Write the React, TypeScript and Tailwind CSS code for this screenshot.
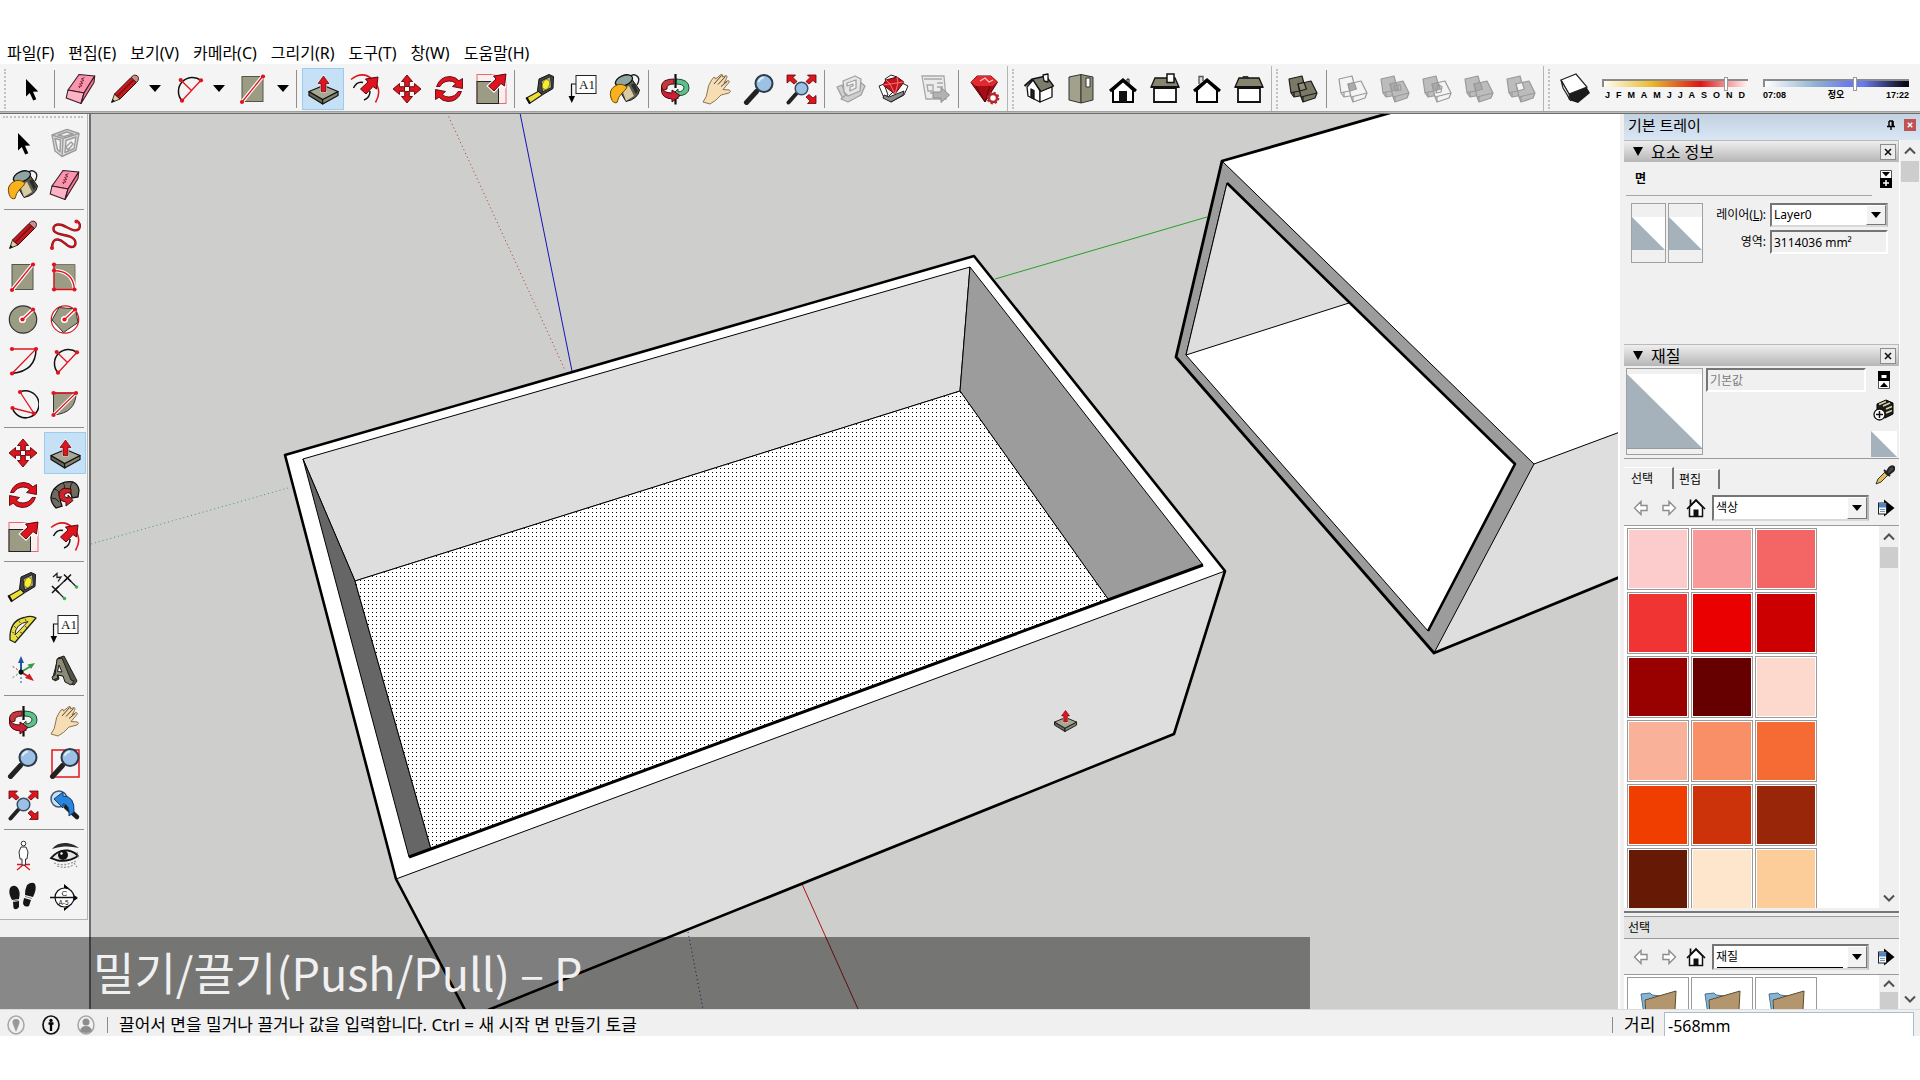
import type { ReactNode } from 'react';

const RED = '#e0141e';
const CLAY = '#9c9b84';
const INK = '#111111';

const SVG = ({ children }: { children: ReactNode }) => (
  <svg viewBox="0 0 32 32" className="size-8 shrink-0" fill="none" aria-hidden="true">
    {children}
  </svg>
);

/* ---------- icons ---------- */

const Dot = ({ x, y }: { x: number; y: number }) => <circle cx={x} cy={y} r="2.1" fill={RED} />;

const CursorIcon = () => (
  <SVG>
    <path d="M11 6V23.5L14.8 20 18.2 27.5 21.3 26.2 18 18.8 23.3 18.5Z" fill="#000" />
  </SVG>
);

const EraserIcon = () => (
  <SVG>
    <g stroke="#3a1a22" strokeWidth="1.1" strokeLinejoin="round">
      <path d="M14 1.5 29.7 3 19 20 3 17Z" fill="#f996ae" />
      <path d="M3 17 19 20 16 30.5 1.2 25Z" fill="#fcb4c4" />
      <path d="M29.7 3 29 9.5 16 30.5 19 20Z" fill="#ee7c98" />
    </g>
    <path d="M19.5 4.5 16.5 6 19 7.5 15.5 8.5 18 10.5 14.5 11 17 13 13.5 13.5 15 15" stroke="#7d2b42" />
  </SVG>
);

const PencilIcon = () => (
  <SVG>
    <path d="M2.5 29.5 5.5 21 11 26Z" fill="#e6cf9c" stroke="#333" />
    <path d="M5.5 21 22 4.5 27.5 9.5 11 26Z" fill="#c31a20" stroke="#3b0808" />
    <path d="M8 23.5 24.5 7" stroke="#7c0e12" strokeWidth="1.5" />
    <path d="M22 4.5 24.5 2.3Q27 1.5 29 3.5 30 6 29 7.5L27.5 9.5Z" fill="#c98f90" stroke="#442020" />
    <path d="M2.5 29.5 3.7 26 6 28.2Z" fill="#111" />
  </SVG>
);

const ArcIcon = () => (
  <SVG>
    <path d="M9 27.7A14 14 0 0 1 28 7.3" stroke={INK} strokeWidth="1.5" />
    <path d="M9 27.7 28 7.3M7.7 7 18.5 17.5" stroke={RED} strokeWidth="1.3" />
    <Dot x={7.7} y={7} />
    <Dot x={28} y={7.3} />
    <Dot x={9} y={27.7} />
  </SVG>
);

const RectIcon = () => (
  <SVG>
    <rect x="5" y="3.5" width="21" height="25" fill={CLAY} stroke="#55544a" />
    <path d="M5 29 26 3" stroke="#fff" strokeWidth="3.6" />
    <path d="M5 29 26 3" stroke={RED} strokeWidth="1.3" />
    <Dot x={5} y={29} />
    <Dot x={26} y={3.5} />
  </SVG>
);

const PushPullShape = () => (
  <>
    <g stroke={INK} strokeLinejoin="round" strokeWidth="1.2">
      <path d="M2 18.5 15.7 26.5V31L2 22.5Z" fill="#66655a" />
      <path d="M31 18.5 15.7 26.5V31L31 22.5Z" fill="#84836f" />
      <path d="M16.5 12.5 31 18.5 15.7 26.5 2 18.5Z" fill="#a8a793" />
    </g>
    <path d="M16.5 3 22 10.5H19V18.5H14V10.5H11Z" fill={RED} stroke="#fff" strokeWidth="1.5" />
    <path d="M16.5 3 22 10.5H19V18.5H14V10.5H11Z" fill={RED} stroke="#4a0508" strokeWidth=".7" />
  </>
);

const PushPullIcon = () => (
  <SVG>
    <PushPullShape />
  </SVG>
);

const DiagonalArrow = () => (
  <path d="M31 1 29.5 13 26 10.5 19 18 13.5 13 21 6 18.5 3Z" fill={RED} stroke="#5a060a" strokeLinejoin="round" />
);

const OffsetIcon = () => (
  <SVG>
    <path d="M2 6.5Q14-3 24 7 34 17 26.5 29.5" stroke={RED} strokeWidth="1.5" />
    <path d="M4.5 15Q8 8 14 9.5M21 18Q21 25 15 27" stroke={INK} strokeWidth="1.5" />
    <g transform="translate(-2 3)">
      <DiagonalArrow />
    </g>
  </SVG>
);

const MoveIcon = () => (
  <SVG>
    {[0, 90, 180, 270].map((angle) => (
      <path
        key={angle}
        transform={`rotate(${angle} 16 16)`}
        d="M16 2 21.5 8.5H18.3V13.5H13.7V8.5H10.5Z"
        fill={RED}
        stroke="#5a060a"
        strokeWidth=".9"
        strokeLinejoin="round"
      />
    ))}
  </SVG>
);

const RotateIcon = () => (
  <SVG>
    {[0, 180].map((angle) => (
      <path
        key={angle}
        transform={`rotate(${angle} 16 16)`}
        d="M3.5 13.5Q7 3.5 17 3.5 23 4 25.8 7.8L29.5 5.5V15.5L19.5 13.5 22.8 10.6Q20 7.8 16 8 9.5 8.5 7 13.5Z"
        fill={RED}
        stroke="#5a060a"
        strokeWidth=".9"
        strokeLinejoin="round"
      />
    ))}
  </SVG>
);

const ScaleIcon = () => (
  <SVG>
    <rect x="2" y="1.5" width="29" height="29" fill="#fbeeee" stroke="#e56a70" />
    <rect x="2" y="8.5" width="21.5" height="22" fill={CLAY} stroke="#222" />
    <path d="M31 1 29.5 13 26 10.5 19 18 13.5 13 21 6 18.5 3Z" stroke="#fff" strokeWidth="3" />
    <DiagonalArrow />
  </SVG>
);

const TapeIcon = () => (
  <SVG>
    <path d="M1.5 25 14 18 17 22 4.5 30.5Z" fill="#eee032" stroke="#222" strokeWidth="1.2" />
    <path d="M1.5 24.5 5 30.5" stroke="#111" strokeWidth="2.2" />
    <path d="M14 6 24 1.5 28.5 3.5 28 15.5 18 21.5 12.5 18Z" fill="#444" stroke="#111" strokeLinejoin="round" />
    <path d="M16 8 25.5 3.5 26.5 14.5 17.5 19Z" fill="#a9a9a4" stroke="#222" />
    <ellipse cx="21" cy="11.5" rx="3.5" ry="5" transform="rotate(20 21 11.5)" fill="#f8ee2c" stroke="#8a8420" />
  </SVG>
);

const TextIcon = () => (
  <SVG>
    <path d="M11 11H4.5V25" stroke={INK} strokeWidth="1.2" />
    <path d="M1.5 23H8L4.8 30Z" fill="#000" />
    <rect x="9" y="2.5" width="20" height="18" fill="#fff" stroke="#222" />
    <text x="12" y="16" fontSize="13" fontFamily="Liberation Serif, serif" fill="#111">
      A1
    </text>
  </SVG>
);

const BucketIcon = () => (
  <SVG>
    <path d="M19 5Q25-1 29 4 31 7 28 12" stroke="#222" strokeWidth="1.4" />
    <path d="M6 10 22 5 30.5 17Q29 26 17 28.5Z" fill="#5f5c50" stroke="#111" />
    <path d="M13 16 20 13 25 23 17 28Z" fill="#d9cba2" />
    <path d="M22 12 25.5 10 29 18 27 21Z" fill="#2c2c2a" />
    <ellipse cx="15" cy="7.5" rx="9" ry="5" transform="rotate(-22 15 7.5)" fill="#8ea5a3" stroke="#111" strokeWidth="1.3" />
    <path d="M6 13Q12 9 18 14 17 17 13 20 9 24 8 29.5 4 31 2 25-.5 17 6 13Z" fill="#f9b21d" stroke="#6b4a08" />
  </SVG>
);

const OrbitIcon = () => (
  <SVG>
    <path d="M17 6Q30 6 30 15 30 22 19 23V26L14 21 19 16V19Q25 18.5 25 14 24 11 17 11Z" fill="#5fc08b" stroke="#1f4a33" />
    <path d="M15 6Q3 6 2.5 13V18L8 16Q7 11 15 11Z" fill="#c4393c" stroke="#4a0a0c" />
    <path d="M2.5 14Q4 20 13 20V17L21 22.5 13 29V26Q3 25 2.5 18Z" fill="#cf1f38" stroke="#4a0a0c" />
    <path d="M16.5 1V15M16.5 26V31.5" stroke="#111" strokeWidth="2.2" />
  </SVG>
);

const HandIcon = () => (
  <SVG>
    <path
      d="M2 29Q6 24 6.5 18 7 12 10 8L12.5 4.5Q14.5 3.5 14.5 6L20 1.5Q22.5 1 21.5 4L25 2.5Q27 3 25.5 5.5L23 10 27 7.5Q29.5 8 27.5 10L22 16.5 28.5 17Q30.5 18.5 28 20L20 22Q15 28 9 31Z"
      fill="#f6ddb4"
      stroke="#8a7350"
      strokeLinejoin="round"
    />
    <path d="M13 11 20.5 2.5M17 11.5 24.5 3.5M20 13.5 26 8.5" stroke="#3c3120" strokeWidth=".9" />
  </SVG>
);

const ZoomShape = () => (
  <>
    <path d="M3.5 29.5 13.5 18.5" stroke="#222" strokeWidth="5" strokeLinecap="round" />
    <circle cx="21" cy="10.5" r="8.5" fill="#9cc1e4" stroke="#2c3a4a" strokeWidth="2" />
    <path d="M15.5 9Q17 5 21 4.5" stroke="#dcebf8" strokeWidth="2" />
  </>
);

const ZoomIcon = () => (
  <SVG>
    <ZoomShape />
  </SVG>
);

const ZoomWindowIcon = () => (
  <SVG>
    <rect x="3" y="3" width="27" height="27" stroke={RED} strokeWidth="1.5" />
    <ZoomShape />
  </SVG>
);

const ZoomExtentsIcon = () => (
  <SVG>
    <path d="M3.5 29.5 11 21" stroke="#222" strokeWidth="4" strokeLinecap="round" />
    <circle cx="16.5" cy="15.5" r="6.3" fill="#9cc1e4" stroke="#3a4c60" strokeWidth="1.5" />
    {[
      'M2 2H10.5L8 4.5 12 8.5 9 11 5 7.5 2 10Z',
      'M31 2H22.5L25 4.5 21 8.5 24 11 28 7.5 31 10Z',
      'M31 30.5H22.5L25 28 21 24 24 21.5 28 25 31 22.5Z',
    ].map((d) => (
      <path key={d} d={d} fill={RED} stroke="#5a060a" strokeWidth=".8" />
    ))}
  </SVG>
);

const WarehouseIcon = () => (
  <SVG>
    <g stroke="#a0a0a0" strokeWidth="1.3" fill="#cfcfcf" strokeLinejoin="round">
      <path d="M2 14 7 12 11 23 8 26Z" />
      <path d="M25 9 30 13 26 22 13 29 6 26 12 21 24 16Z" />
      <path d="M8 8 20 3 26 6 25 18 13 23 9 19Z" fill="#e6e6e6" />
      <path d="M12 10 21 7V15L15 18V14L18 13V11L12 13Z" fill="#f4f4f4" />
    </g>
  </SVG>
);

const ShareModelIcon = () => (
  <SVG>
    <g stroke="#222" fill="#fff" strokeLinejoin="round">
      <path d="M2 13 7 11 11 22 7 25Z" />
      <path d="M25 10 31 13 27 22 14 29 11 24Z" />
      <path d="M8 6 14 2 20 4 12 12Z" />
      <path d="M7 22 12 24 27 18 26 22 14 29 6 25Z" fill="#8d8d8d" />
    </g>
    <path d="M9 7 20 4 27 9 18 21 6 12Z" fill="#c3131b" stroke="#5a060a" />
    <path d="M9 7 13 11 27 9M13 11 6 12M13 11 18 21 21 10 20 4" stroke="#ff8a8a" strokeWidth=".8" />
  </SVG>
);

const LayoutExportIcon = () => (
  <SVG>
    <g stroke="#a8a8a8" strokeWidth="1.3">
      <path d="M3 3H25L27 26H7Z" fill="#ececec" />
      <path d="M5 6H23M8 12H14V18H9ZM18 10H24M18 14H24M11 20H14" />
    </g>
    <path d="M14 19H22V14.5L30.5 22 22 29.5V25H14Z" fill="#b2b2b2" stroke="#8e8e8e" />
  </SVG>
);

const RubyIcon = () => (
  <SVG>
    <path d="M8 3H22L28.5 9 16 29 2 9.5Z" fill="#a50d14" stroke="#4a0508" />
    <path d="M8 3H22L28.5 9 24 13H7L2 9.5Z" fill="#e02a30" />
    <path d="M11 8 16 5 20 9 24 7" stroke="#ffc2c2" strokeWidth="1.3" />
    <path d="M7 13 16 29 21 13" stroke="#5d060a" />
    <circle cx="24" cy="25" r="4" fill="#fff" stroke="#b3262c" strokeWidth="2.5" />
    <circle cx="24" cy="25" r="5.5" stroke="#b3262c" strokeWidth="1.8" strokeDasharray="2.2 2.1" />
  </SVG>
);

const HouseIsoIcon = () => (
  <SVG>
    <g stroke="#111" strokeLinejoin="round" strokeWidth="1.3">
      <path d="M4 14 10 7 17 18V29L5 23Z" fill="#fff" />
      <path d="M17 18 29 14V24L17 29Z" fill="#fff" />
      <path d="M9.5 6 23 3 30.5 13 18 18.5Z" fill="#7e7d6d" />
      <path d="M9.5 6 1.5 13" strokeWidth="2" />
      <path d="M20 2 25 1V9L21 8Z" fill="#fff" />
      <path d="M8 16 11 17.5V26L8 24.5Z" fill="#222" />
    </g>
  </SVG>
);

const HouseTopIcon = () => (
  <SVG>
    <g stroke="#333" strokeLinejoin="round">
      <path d="M4 4 16 1.5V30L4 27Z" fill="#a2a18b" />
      <path d="M16 1.5 28 4V27L16 30Z" fill="#8f8e79" />
      <rect x="21" y="5" width="4" height="9" fill="#fff" />
    </g>
  </SVG>
);

const HouseFrontIcon = () => (
  <SVG>
    <path d="M6 17V29H26V17L16 8Z" fill="#fff" stroke="#000" strokeWidth="2" />
    <path d="M3 18 16 7 29 18" stroke="#000" strokeWidth="3" />
    <path d="M12 29V18H20V29Z" fill="#111" />
    <path d="M20 9V6H22V11" stroke="#111" />
  </SVG>
);

const HouseSideIcon = ({ chimney }: { chimney?: boolean }) => (
  <SVG>
    <path d="M5 15H27V29H5Z" fill="#fff" stroke="#111" strokeWidth="1.8" />
    {!chimney && <path d="M10 5V3.5H15V5" fill="#999" stroke="#333" />}
    <path d="M6 5H26L30 14H2Z" fill="#86856f" stroke="#111" strokeWidth="1.3" />
    <path d="M2 14H30" stroke="#111" strokeWidth="2" />
    {chimney && <rect x="18" y="1" width="7" height="8.5" fill="#fff" stroke="#111" strokeWidth="1.5" />}
  </SVG>
);

const HouseBackIcon = () => (
  <SVG>
    <path d="M8 11V3.5H12V8" fill="#ddd" stroke="#555" strokeWidth="1.3" />
    <path d="M6 17V29H26V17L16 8Z" fill="#fff" stroke="#000" strokeWidth="2" />
    <path d="M3 18 16 7 29 18" stroke="#000" strokeWidth="3" />
  </SVG>
);

type SolidKind = 'shell' | 'intersect' | 'union' | 'subtract' | 'trim' | 'split';

const SolidIcon = ({ kind }: { kind: SolidKind }) => {
  const dark = kind === 'shell';
  const line = dark ? '#1c1c18' : '#9a9a9a';
  const solid = dark ? '#7a7968' : '#bcbcbc';
  const clear = '#f4f4f4';
  const back = kind === 'intersect' ? clear : solid;
  const front = kind === 'intersect' || kind === 'subtract' ? clear : solid;
  const overlap = kind === 'split' ? clear : dark ? '#8d8c79' : '#ababab';
  return (
    <SVG>
      <g stroke={line} strokeLinejoin="round" strokeWidth="1.2">
        <path d="M2 6 15 3 19 18 18 22 7 24 4 20Z" fill={back} />
        <path d="M4 20 7 19 19 17M7 19 7 24" />
        <path d="M11 11 24 8 30 20 28 25 16 29 14 24Z" fill={front} />
        <path d="M14 24 30 20M16 24 16 29" />
        <path d="M11 11 17 9.5 19.5 16 13 18Z" fill={overlap} />
        {kind === 'union' && <path d="M15 13 21 11.5 22 17 17 18Z" />}
        {kind === 'subtract' && <path d="M17 11 21 14 20 19 15 20Z" />}
      </g>
    </SVG>
  );
};

const ShadowIcon = () => (
  <SVG>
    <path d="M6 17 10 27 19 30 31 20 27 13Z" fill="#1b1b1b" />
    <path d="M2 7 17 1 28 14 10 21Z" fill="#fff" stroke="#222" strokeWidth="1.2" />
    <path d="M2 7 4 15 12 28 10 21Z" fill="#f2f2f2" stroke="#222" strokeWidth="1.2" />
  </SVG>
);

const ComponentIcon = () => (
  <SVG>
    <g stroke="#9c9c9c" strokeWidth="1.4" strokeLinejoin="round">
      <path d="M3 8 18 2.5 30 6.5 27 23 13 29.5 6 24Z" fill="#dedede" />
      <path d="M3 8 14 11.5 30 6.5M14 11.5 13 29.5" />
      <path d="M6 11.5 11.5 13 11 25 8.5 22.5ZM17 13.5 27 10 25 21.5 16 25.5Z" fill="#f4f4f4" />
      <path d="M9 8 18 5 24 7 15 9.5Z" fill="#f4f4f4" />
      <path d="M17 20 22 15 24 17 19 23Z" />
    </g>
  </SVG>
);

const FREEHAND =
  'M3 29Q3 20 9 20.5C15 21 16 27 22 28 28 28 28 21 22 18 17 15.5 8 16 5 12 3 7 7 4.5 13 6 19 8 25 14 30 10 32 6 30 3 28 2.5';

const FreehandIcon = () => (
  <SVG>
    <path d={FREEHAND} stroke="#7b1116" strokeWidth="2.4" />
    <path d={FREEHAND} stroke={RED} strokeWidth="1.2" />
    <Dot x={3} y={29} />
    <Dot x={27.5} y={2.5} />
  </SVG>
);

const RotatedRectIcon = () => (
  <SVG>
    <path d="M5 3.5H26V28.5H5Z" fill={CLAY} stroke="#77766a" />
    <path d="M5 9.5Q24 10 25.5 28.5" stroke="#fff" strokeWidth="3.6" />
    <path d="M5 3.5V28.5H25.5Q24 10 5 9.5" stroke={RED} strokeWidth="1.3" />
    <Dot x={5} y={3.5} />
    <Dot x={5} y={9.5} />
    <Dot x={5} y={28.5} />
    <Dot x={25.5} y={28.5} />
  </SVG>
);

const CircleIcon = ({ polygon }: { polygon?: boolean }) => (
  <SVG>
    <circle cx="16" cy="16.5" r="13.7" fill={polygon ? '#fff' : CLAY} stroke={polygon ? RED : '#333'} strokeWidth="1.2" />
    {polygon && <path d="M10 4.5 26.5 6 29 19.5 14.5 29.5 3 17Z" fill={CLAY} stroke="#333" />}
    <path d="M15.5 16.5 26 6.5" stroke="#fff" strokeWidth="4" />
    <circle cx="15.5" cy="16.5" r="3.6" fill="#fff" />
    <path d="M15.5 16.5 26 6.5" stroke={RED} strokeWidth="1.3" />
    <Dot x={15.5} y={16.5} />
    <Dot x={26} y={6.5} />
  </SVG>
);

const CenterArcIcon = () => (
  <SVG>
    <path d="M29 4Q29 26 5 28.5" stroke={INK} strokeWidth="1.5" />
    <path d="M5 4H29L5 28.5" stroke={RED} strokeWidth="1.3" />
    <Dot x={5} y={4} />
    <Dot x={29} y={4} />
    <Dot x={5} y={28.5} />
  </SVG>
);

const ThreePointArcIcon = () => (
  <SVG>
    <path d="M13 5A13.5 13.5 0 1 1 5.5 21" stroke={INK} strokeWidth="1.5" />
    <path d="M13 5 27 26.5 5.5 21" stroke={RED} strokeWidth="1.3" />
    <Dot x={13} y={5} />
    <Dot x={27} y={26.5} />
    <Dot x={5.5} y={21} />
  </SVG>
);

const PieIcon = () => (
  <SVG>
    <path d="M4.5 6H27Q27 26 4.5 28Z" fill={CLAY} stroke="#333" />
    <path d="M4.5 28 27 6" stroke="#fff" strokeWidth="3.4" />
    <path d="M4.5 28 27 6H4.5" stroke={RED} strokeWidth="1.3" />
    <Dot x={4.5} y={6} />
    <Dot x={27} y={6} />
    <Dot x={4.5} y={28} />
  </SVG>
);

const FollowMeIcon = () => (
  <SVG>
    <path d="M7 29Q-2 20 5 10 13 1 24 3 29 5 30 11L29 18 23 19Q22 10 14 13 9 17 13 27Z" fill="#6d6c5e" stroke="#111" strokeWidth="1.3" />
    <path d="M24 3Q19 7 23 19M14 4Q17 7 14 13M5 10Q11 11 10 17M3 19Q8 19 10 23" stroke="#1c1c18" />
    <path d="M22 10Q10 7 10 16 10 22 17 23V27L24 21.5 19 16V19Q14 18 16 15 18 13 22 14Z" fill="#c9252b" stroke="#4a0508" />
  </SVG>
);

const DimensionIcon = () => (
  <SVG>
    <path d="M6.5 18.5 18.5 7M6.5 18.5 15 27M18.5 7 27 15.5" stroke="#222" strokeWidth="1.2" />
    <path d="M3 15 10 22M10 15 3 22M15 3.5 22 10.5M22 3.5 15 10.5" stroke="#111" strokeWidth="1.5" />
    <path d="M4 6 8 2.5 8 6.5 12 6 9 10.5" stroke="#222" strokeWidth="1.3" />
    <circle cx="15.5" cy="27.5" r="1.8" fill="#39b24a" />
    <circle cx="27.5" cy="16" r="1.8" fill="#39b24a" />
  </SVG>
);

const ProtractorIcon = () => (
  <SVG>
    <path d="M3 27Q2 8 17 4.5 25 2 29 5L8 29.5Z" fill="#e9dd3c" stroke="#222" strokeWidth="1.3" strokeLinejoin="round" />
    <path d="M8 22Q8 11 21 8.5Z" fill="#f4f4f4" stroke="#222" />
    <path d="M5 19 7 20M7 13 9 15M12 8 13.5 10M18 5.5 19 8M11 25 9 23M15 20 13 19M20 15 18 13" stroke="#555" />
  </SVG>
);

const AxesIcon = () => (
  <SVG>
    <path d="M14 17V8" stroke="#1f55a5" strokeWidth="2" />
    <path d="M11 8 14 1 17 8Z" fill="#1f55a5" />
    <path d="M14 17 24 11" stroke="#3a9c46" strokeWidth="2" />
    <path d="M20.5 9.5 28 8 24 14Z" fill="#3a9c46" />
    <path d="M14 17 22 22" stroke="#c52026" strokeWidth="2" />
    <path d="M18 23 27 26 22.5 18.5Z" fill="#c52026" />
    <path d="M14 18V28" stroke="#1f55a5" strokeDasharray="2 2" />
    <path d="M14 17 5 11" stroke="#c52026" strokeDasharray="2 2" />
    <path d="M14 17 5 23" stroke="#3a9c46" strokeDasharray="2 2" />
    <circle cx="14" cy="17" r="2.5" fill="#111" />
  </SVG>
);

const Text3DIcon = () => (
  <SVG>
    <g stroke="#1c1c18" strokeLinejoin="round">
      <path d="M9 3 15 1 26 22 28 26 25 30 17 27 15 21 9 20 10 24 6 26 4 22Z" fill="#55544a" />
      <path d="M8 4 13 3 22 25 25 26 22 30 16 27 14 21 8 20 9 23 4 25 3 22 6 20Z" fill="#8b8a77" />
      <path d="M10 10 13 17 8.5 16.5Z" fill="#eee" />
    </g>
  </SVG>
);

const PreviousViewIcon = () => (
  <SVG>
    <path d="M17 18 28 28" stroke="#1d1d1d" strokeWidth="4.5" strokeLinecap="round" />
    <circle cx="10" cy="10" r="8" fill="#cbdff0" stroke="#41586e" strokeWidth="1.5" />
    <path d="M5 10 14 3V7Q26 7 25 23L20 27Q21 15 14 15V19Z" fill="#2a86dc" stroke="#0f3f75" />
  </SVG>
);

const PositionCameraIcon = () => (
  <SVG>
    <path d="M10 31 16.5 25.5 23 31M10 25.5H23" stroke={RED} strokeWidth="1.3" />
    <circle cx="16.5" cy="4.5" r="2.3" fill="#fff" stroke="#333" />
    <path d="M14 8H19L21 13 20 20H18.5V26H15V20H13L12 13Z" fill="#fff" stroke="#333" strokeLinejoin="round" />
  </SVG>
);

const EyeIcon = () => (
  <SVG>
    <path d="M3 10Q8 3 18 4 25 5 30 9 22 7 15 7.5 8 8 3 10Z" fill="#2b2b2b" />
    <path d="M2 19Q10 10 19 11.5 26 13 29 17 20 23 9 21.5Z" fill="#e4e4e4" stroke="#111" strokeWidth="1.8" />
    <circle cx="14" cy="16" r="5" fill="#111" />
    <circle cx="12.5" cy="14.5" r="1.2" fill="#fff" />
    <path d="M5 24Q15 28 27 22M8 27Q18 30 24 26M25 24 28 28M28 13 30 20" stroke="#999" strokeWidth="1.3" strokeDasharray="2 1.5" />
  </SVG>
);

const FootprintsIcon = () => (
  <SVG>
    <g fill="#161616">
      <path d="M3 7Q6 3 10 6 14 10 12 18L5 19Q1 12 3 7Z" />
      <path d="M6 21 12 20 12 26Q9 30 6.5 27Z" />
      <path d="M20 4Q25 0 28 3 30 8 26 16L18 14Q18 8 20 4Z" />
      <path d="M17 17 24 19 22 25Q17 27 16 22Z" />
    </g>
    <path d="M6 20 12 19M18 15.5 25 17.5" stroke="#888" />
  </SVG>
);

const SectionIcon = () => (
  <SVG>
    <path d="M15 3V7L21 8ZM29 17 22 12V22ZM15 30V27L21 25Z" fill="#000" />
    <circle cx="15.5" cy="16.5" r="9.5" fill="#fff" stroke="#111" strokeWidth="1.2" />
    <path d="M1 16.5H28" stroke="#111" strokeWidth="1.5" />
    <text x="12.5" y="14.5" fontSize="8" fontFamily="Liberation Sans, sans-serif" fill="#111">
      C
    </text>
    <text x="9.5" y="23.5" fontSize="6.5" fontFamily="Liberation Sans, sans-serif" fill="#111">
      A-5
    </text>
  </SVG>
);

/* ---------- toolbars ---------- */

const ToolButton = ({ label, active, wide, children }: { label: string; active?: boolean; wide?: boolean; children: ReactNode }) => (
  <button
    type="button"
    aria-label={label}
    className={`flex h-[42px] shrink-0 items-center justify-center ${wide ? 'w-[46px]' : 'w-[42px]'} ${
      active ? 'border border-[#9ccbf0] bg-[#c6e0f6]' : ''
    }`}
  >
    {children}
  </button>
);

const SplitTool = ({ label, children }: { label: string; children: ReactNode }) => (
  <div className="flex shrink-0">
    <ToolButton label={label} wide>
      {children}
    </ToolButton>
    <button type="button" aria-label={`${label} 옵션`} className="flex w-[18px] items-center pl-px">
      <svg viewBox="0 0 12 7" className="h-[7px] w-3" aria-hidden="true">
        <path d="M0 0H12L6 7Z" fill="#000" />
      </svg>
    </button>
  </div>
);

const Separator = () => <div className="mr-[5px] ml-0.5 h-[38px] w-px shrink-0 bg-[#8f8f8f]" />;

const Grip = () => <div className="h-10 w-0 shrink-0 border-l-2 border-dotted border-[#c2c2c2]" />;

const GroupEnd = () => (
  <div className="ml-px flex h-[46px] w-[11px] shrink-0 items-center border-l border-[#b4b4b4] pl-1">
    <Grip />
  </div>
);

const SLIDER =
  'block h-[8px] w-full appearance-none border-t-2 border-l-2 border-t-[#8a8a8a] border-l-[#8a8a8a] [&::-webkit-slider-thumb]:h-[14px] [&::-webkit-slider-thumb]:w-[4px] [&::-webkit-slider-thumb]:appearance-none [&::-webkit-slider-thumb]:border [&::-webkit-slider-thumb]:border-[#9a9a9a] [&::-webkit-slider-thumb]:bg-white';

const MONTHS = ['J', 'F', 'M', 'A', 'M', 'J', 'J', 'A', 'S', 'O', 'N', 'D'];

function TopToolbar() {
  return (
    <div className="flex h-[47px] shrink-0 items-center overflow-hidden bg-[#f4f4f4] pt-0.5 pl-1">
      <div className="w-1.5 shrink-0">
        <Grip />
      </div>
      <ToolButton label="선택"><CursorIcon /></ToolButton>
      <Separator />
      <ToolButton label="지우개"><EraserIcon /></ToolButton>
      <SplitTool label="선"><PencilIcon /></SplitTool>
      <SplitTool label="호"><ArcIcon /></SplitTool>
      <SplitTool label="직사각형"><RectIcon /></SplitTool>
      <Separator />
      <ToolButton label="밀기/끌기" active><PushPullIcon /></ToolButton>
      <ToolButton label="오프셋"><OffsetIcon /></ToolButton>
      <ToolButton label="이동"><MoveIcon /></ToolButton>
      <ToolButton label="회전"><RotateIcon /></ToolButton>
      <ToolButton label="배율"><ScaleIcon /></ToolButton>
      <Separator />
      <ToolButton label="줄자"><TapeIcon /></ToolButton>
      <ToolButton label="텍스트"><TextIcon /></ToolButton>
      <ToolButton label="페인트통"><BucketIcon /></ToolButton>
      <Separator />
      <ToolButton label="궤도"><OrbitIcon /></ToolButton>
      <ToolButton label="이동 보기"><HandIcon /></ToolButton>
      <ToolButton label="확대/축소"><ZoomIcon /></ToolButton>
      <ToolButton label="범위 확대"><ZoomExtentsIcon /></ToolButton>
      <Separator />
      <ToolButton label="3D 웨어하우스"><WarehouseIcon /></ToolButton>
      <ToolButton label="모델 공유"><ShareModelIcon /></ToolButton>
      <ToolButton label="레이아웃으로 보내기"><LayoutExportIcon /></ToolButton>
      <Separator />
      <ToolButton label="확장 프로그램"><RubyIcon /></ToolButton>
      <GroupEnd />
      <ToolButton label="등각"><HouseIsoIcon /></ToolButton>
      <ToolButton label="평면"><HouseTopIcon /></ToolButton>
      <ToolButton label="정면"><HouseFrontIcon /></ToolButton>
      <ToolButton label="오른쪽"><HouseSideIcon chimney /></ToolButton>
      <ToolButton label="뒤"><HouseBackIcon /></ToolButton>
      <ToolButton label="왼쪽"><HouseSideIcon /></ToolButton>
      <GroupEnd />
      <ToolButton label="외부 셸"><SolidIcon kind="shell" /></ToolButton>
      <Separator />
      <ToolButton label="교차"><SolidIcon kind="intersect" /></ToolButton>
      <ToolButton label="결합"><SolidIcon kind="union" /></ToolButton>
      <ToolButton label="빼기"><SolidIcon kind="subtract" /></ToolButton>
      <ToolButton label="자르기"><SolidIcon kind="trim" /></ToolButton>
      <ToolButton label="분할"><SolidIcon kind="split" /></ToolButton>
      <GroupEnd />
      <ToolButton label="그림자"><ShadowIcon /></ToolButton>
      <div className="ml-1.5 w-[146px] shrink-0 pt-0.5">
        <input
          type="range"
          aria-label="날짜"
          defaultValue={86}
          className={`${SLIDER} bg-[linear-gradient(90deg,#fffdf4,#e9bb2c_33%,#e21414_67%,#f08080_82%,#fff4f4)]`}
        />
        <div className="flex justify-between px-[3px] pt-[3px] font-[Liberation_Sans] text-[9px] leading-[10px] font-bold text-black">
          {MONTHS.map((month, i) => (
            <span key={i}>{month}</span>
          ))}
        </div>
      </div>
      <div className="ml-[15px] w-[146px] shrink-0 pt-0.5">
        <input
          type="range"
          aria-label="시간"
          defaultValue={63}
          className={`${SLIDER} bg-[linear-gradient(90deg,#ffffff,#8fb2d0_35%,#6a7bf0_58%,#6a7bf0_68%,#0a0a18_97%)]`}
        />
        <div className="flex justify-between pt-[3px] font-[Liberation_Sans,Noto_Sans_CJK_KR] text-[9px] leading-[10px] font-bold text-black">
          <span>07:08</span>
          <span>정오</span>
          <span>17:22</span>
        </div>
      </div>
    </div>
  );
}

const Rule = () => <div className="mt-[3px] mr-[3px] mb-1 ml-0.5 h-px bg-[#8f8f8f]" />;

const ToolGrid = ({ children }: { children: ReactNode }) => <div className="grid grid-cols-[42px_42px]">{children}</div>;

function SideToolbar() {
  return (
    <div className="w-[89px] shrink-0 bg-[#f0f0f0]">
      <div className="w-[88px] border-r border-b border-[#b4b4b4] bg-[#f4f4f4] pt-0.5 pb-px pl-0.5">
        <div className="mr-1 mb-1 ml-px border-t-2 border-dotted border-[#c2c2c2]" />
        <ToolGrid>
          <ToolButton label="선택"><CursorIcon /></ToolButton>
          <ToolButton label="구성 요소"><ComponentIcon /></ToolButton>
          <ToolButton label="페인트통"><BucketIcon /></ToolButton>
          <ToolButton label="지우개"><EraserIcon /></ToolButton>
        </ToolGrid>
        <Rule />
        <ToolGrid>
          <ToolButton label="선"><PencilIcon /></ToolButton>
          <ToolButton label="자유 곡선"><FreehandIcon /></ToolButton>
          <ToolButton label="직사각형"><RectIcon /></ToolButton>
          <ToolButton label="회전된 직사각형"><RotatedRectIcon /></ToolButton>
          <ToolButton label="원"><CircleIcon /></ToolButton>
          <ToolButton label="다각형"><CircleIcon polygon /></ToolButton>
          <ToolButton label="호"><CenterArcIcon /></ToolButton>
          <ToolButton label="2점호"><ArcIcon /></ToolButton>
          <ToolButton label="3점호"><ThreePointArcIcon /></ToolButton>
          <ToolButton label="파이"><PieIcon /></ToolButton>
        </ToolGrid>
        <Rule />
        <ToolGrid>
          <ToolButton label="이동"><MoveIcon /></ToolButton>
          <ToolButton label="밀기/끌기" active><PushPullIcon /></ToolButton>
          <ToolButton label="회전"><RotateIcon /></ToolButton>
          <ToolButton label="따라가기"><FollowMeIcon /></ToolButton>
          <ToolButton label="배율"><ScaleIcon /></ToolButton>
          <ToolButton label="오프셋"><OffsetIcon /></ToolButton>
        </ToolGrid>
        <Rule />
        <ToolGrid>
          <ToolButton label="줄자"><TapeIcon /></ToolButton>
          <ToolButton label="치수"><DimensionIcon /></ToolButton>
          <ToolButton label="각도기"><ProtractorIcon /></ToolButton>
          <ToolButton label="텍스트"><TextIcon /></ToolButton>
          <ToolButton label="축"><AxesIcon /></ToolButton>
          <ToolButton label="3D 텍스트"><Text3DIcon /></ToolButton>
        </ToolGrid>
        <Rule />
        <ToolGrid>
          <ToolButton label="궤도"><OrbitIcon /></ToolButton>
          <ToolButton label="이동 보기"><HandIcon /></ToolButton>
          <ToolButton label="확대/축소"><ZoomIcon /></ToolButton>
          <ToolButton label="확대 창"><ZoomWindowIcon /></ToolButton>
          <ToolButton label="범위 확대"><ZoomExtentsIcon /></ToolButton>
          <ToolButton label="이전"><PreviousViewIcon /></ToolButton>
        </ToolGrid>
        <Rule />
        <ToolGrid>
          <ToolButton label="카메라 배치"><PositionCameraIcon /></ToolButton>
          <ToolButton label="둘러보기"><EyeIcon /></ToolButton>
          <ToolButton label="걷기"><FootprintsIcon /></ToolButton>
          <ToolButton label="단면"><SectionIcon /></ToolButton>
        </ToolGrid>
      </div>
    </div>
  );
}

/* ---------- 3D viewport ---------- */

function Viewport() {
  return (
    <div className="min-w-0 flex-1 overflow-hidden border-l-2 border-[#6e6e6e] bg-[#cececc]">
      <svg viewBox="91 114 1527 895" preserveAspectRatio="xMinYMin slice" className="block size-full" fill="none">
        <defs>
          <pattern id="selected" width="4" height="4" patternUnits="userSpaceOnUse">
            <rect width="4" height="4" fill="#fff" />
            <rect width="1" height="1" fill="#000" />
          </pattern>
        </defs>

        {/* axes */}
        <path d="M520 113 572 371" stroke="#1414b4" />
        <path d="M447 113 565 370" stroke="#b43232" strokeDasharray="1 3" />
        <path d="M995 279 1207 217" stroke="#28a028" />
        <path d="M91 544 288 488" stroke="#3c9c5c" strokeDasharray="1 3" />
        <path d="M802 884 858 1009" stroke="#aa1414" />

        {/* drawer box */}
        <g strokeLinejoin="round" stroke="#000">
          <path d="M396 879 1225 571 1174 734 488 1010H465Z" fill="#dedede" stroke="none" />
          <path d="M974 256 1225 571 396 879 285 455Z" fill="#fff" stroke="none" />
          <path d="M970 267 960 391 355 581 303 459Z" fill="#dedede" />
          <path d="M970 267 1203 565 1108 599 960 391Z" fill="#9c9c9c" />
          <path d="M303 459 355 581 431 849 409 857Z" fill="#666" />
          <path d="M960 391 1108 599 431 849 355 581Z" fill="url(#selected)" />
          <path d="M396 879 1225 571" />
          <path d="M409 857 1203 565" strokeWidth="3" />
          <path d="M465 1010 396 879 285 455 974 256 1225 571 1174 734 488 1010" strokeWidth="2.6" />
        </g>
        <path d="M688 932 703 1009" stroke="#28288c" strokeDasharray="1 3" />

        {/* second box */}
        <g strokeLinejoin="round" stroke="#000">
          <path d="M1222 161 1393 112H1620V432L1534 464Z" fill="#fff" stroke="none" />
          <path d="M1534 464 1620 432V577L1434 653Z" fill="#dedede" stroke="none" />
          <path d="M1222 161 1534 464 1434 653 1176 357Z" fill="#9c9c9c" />
          <path d="M1227 183 1515 464 1428 631 1186 355Z" fill="#fff" />
          <path d="M1227 183 1349 303 1186 355Z" fill="#dedede" />
          <path d="M1227 183 1515 464 1428 631" strokeWidth="2.6" />
          <path d="M1534 464 1620 432" />
          <path d="M1393 112 1222 161 1176 357 1434 653 1620 577" strokeWidth="2.8" />
        </g>

        <g transform="translate(1053 708) scale(.76)">
          <PushPullShape />
        </g>
      </svg>
    </div>
  );
}

/* ---------- tray ---------- */

const ScrollArrow = ({ down }: { down?: boolean }) => (
  <svg viewBox="0 0 12 8" className="h-2 w-3" fill="none" aria-hidden="true">
    <path d={down ? 'M1 1.5 6 6.5 11 1.5' : 'M1 6.5 6 1.5 11 6.5'} stroke="#505050" strokeWidth="2" />
  </svg>
);

const ScrollBar = ({ down }: { down?: boolean }) => (
  <div className="flex w-5 shrink-0 flex-col items-center bg-[#f0f0f0]">
    <button type="button" aria-label="위로" className="flex h-[21px] items-center">
      <ScrollArrow />
    </button>
    <div className="h-[21px] w-[18px] bg-[#cdcdcd]" />
    {down && (
      <button type="button" aria-label="아래로" className="mt-auto flex h-[21px] items-center">
        <ScrollArrow down />
      </button>
    )}
  </div>
);

const SectionHeader = ({ title }: { title: string }) => (
  <div className="flex h-[22px] shrink-0 items-center border-t border-r border-[#b9b9b9] bg-linear-to-b from-[#efefef] to-[#b6b6b6] pr-0.5 pl-[9px]">
    <svg viewBox="0 0 10 9" className="h-[9px] w-2.5" aria-hidden="true">
      <path d="M0 0H10L5 9Z" fill="#000" />
    </svg>
    <h2 className="ml-2 flex-1 text-[16px] leading-5 text-black">{title}</h2>
    <button type="button" aria-label={`${title} 닫기`} className="flex size-4 items-center justify-center border border-[#8c8c8c] bg-[#ececec]">
      <svg viewBox="0 0 8 8" className="size-2" aria-hidden="true">
        <path d="M1 1 7 7M7 1 1 7" stroke="#111" strokeWidth="1.6" />
      </svg>
    </button>
  </div>
);

const MaterialPreview = ({ className }: { className: string }) => (
  <svg viewBox="0 0 10 10" preserveAspectRatio="none" className={className} aria-hidden="true">
    <path d="M0 0H10V10Z" fill="#fff" />
    <path d="M0 0 10 10H0Z" fill="#a6b2bb" />
  </svg>
);

const SelectBox = ({ id, label, value, underline, className }: { id: string; label?: string; value: string; underline?: boolean; className: string }) => (
  <div className={`relative border-2 border-t-[#757575] border-r-[#b8b8b8] border-b-[#d8d8d8] border-l-[#757575] bg-white ${className}`}>
    <select id={id} aria-label={label} className="size-full appearance-none pl-0.5 text-black outline-none">
      <option>{value}</option>
    </select>
    {underline && <div className="pointer-events-none absolute right-6 bottom-0 left-[3px] h-px bg-black" />}
    <span className="pointer-events-none absolute inset-y-0 right-0 flex w-5 items-center justify-center border border-t-white border-r-[#777] border-b-[#777] border-l-white bg-[#f2f2f2]">
      <svg viewBox="0 0 10 6" className="h-1.5 w-2.5" aria-hidden="true">
        <path d="M0 0H10L5 6Z" fill="#000" />
      </svg>
    </span>
  </div>
);

const NavRow = ({ id, label, value, underline }: { id: string; label: string; value: string; underline?: boolean }) => (
  <div className="flex h-9 shrink-0 items-center border-b border-[#9a9a9a] pl-[9px] text-[12px]">
    <button type="button" aria-label="뒤로" className="mr-3">
      <svg viewBox="0 0 16 16" className="size-4" fill="#fff" stroke="#8c8c8c" strokeWidth="1.4" aria-hidden="true">
        <path d="M8 1.5V5.5H14V10.5H8V14.5L1.5 8Z" />
      </svg>
    </button>
    <button type="button" aria-label="앞으로" className="mr-[9px]">
      <svg viewBox="0 0 16 16" className="size-4" fill="#fff" stroke="#8c8c8c" strokeWidth="1.4" aria-hidden="true">
        <path d="M8 1.5V5.5H2V10.5H8V14.5L14.5 8Z" />
      </svg>
    </button>
    <button type="button" aria-label="홈" className="mr-1.5">
      <svg viewBox="0 0 20 20" className="size-5" fill="none" aria-hidden="true">
        <path d="M3.5 9V18.5H16.5V9L10 2.5Z" fill="#fff" stroke="#111" strokeWidth="1.5" />
        <path d="M1 11 10 2 19 11M4.5 7V1.5" stroke="#111" strokeWidth="1.7" />
        <path d="M7.5 18.5V11.5H12.5V18.5Z" fill="#111" />
      </svg>
    </button>
    <SelectBox id={id} label={label} value={value} underline={underline} className="h-[26px] flex-1" />
    <button type="button" aria-label="세부 정보" className="mr-1 ml-2">
      <svg viewBox="0 0 18 18" className="size-[18px]" aria-hidden="true">
        <path d="M7 5V.5L17.5 9 7 17.5V14Z" fill="#000" />
        <rect x="1.5" y="4" width="8" height="11" fill="#f4f8fc" stroke="#222" />
        <rect x="2" y="4.5" width="7" height="4" fill="#4d86c6" />
        <path d="M3 10.5H8M3 12.5H8" stroke="#7593b3" />
      </svg>
    </button>
  </div>
);

const COLORS = [
  '#fccccc', '#f99999', '#f46666',
  '#f03333', '#ea0000', '#cc0000',
  '#990000', '#660000', '#fcd9cc',
  '#f9b299', '#f98f66', '#f66b33',
  '#f03d00', '#cc330a', '#992608',
  '#661a05', '#fee6cc', '#fccc99',
];

const FolderIcon = () => (
  <svg viewBox="0 0 40 40" className="mt-3 size-10" aria-hidden="true">
    <path d="M3 4 12 3 14 5 22 6V36L8 38Z" fill="#86b6d4" stroke="#46718c" />
    <path d="M7 10 38 1 36 38H9Z" fill="#b3966d" stroke="#5c4a30" />
  </svg>
);

function Tray() {
  return (
    <aside className="flex w-[302px] shrink-0 flex-col border-l-2 border-white bg-[#f0f0f0] pl-1">
      <div className="flex h-[26px] shrink-0 items-center bg-linear-to-b from-[#c3d1e1] to-[#d9e6f4] pr-1 pb-1 pl-1">
        <h1 className="flex-1 text-[15px] leading-5 text-black">기본 트레이</h1>
        <button type="button" aria-label="고정" className="mr-2">
          <svg viewBox="0 0 10 10" className="size-2.5" fill="none" aria-hidden="true">
            <path d="M3 1V6M3 1H7M7 1V6M1 6.5H9M5 6V10" stroke="#000" strokeWidth="1.4" />
            <path d="M6.5 1V6" stroke="#000" strokeWidth="2" />
          </svg>
        </button>
        <button type="button" aria-label="트레이 닫기" className="flex size-3 items-center justify-center bg-[#bf5254]">
          <svg viewBox="0 0 8 8" className="size-1.5" aria-hidden="true">
            <path d="M1 1 7 7M7 1 1 7" stroke="#fff" strokeWidth="1.8" />
          </svg>
        </button>
      </div>

      <div className="flex min-h-0 flex-1">
        <div className="flex min-h-0 min-w-0 flex-1 flex-col border-r border-white">
          <SectionHeader title="요소 정보" />

          <section className="h-[182px] shrink-0 pr-[7px] pl-0.5">
            <div className="flex h-[33px] items-center justify-between pl-[9px]">
              <span className="text-[12px] font-bold text-black">면</span>
              <button type="button" aria-label="세부 정보 보기">
                <svg viewBox="0 0 12 18" className="h-[18px] w-3" aria-hidden="true">
                  <path d="M.5.5H11.5V17.5H.5Z" fill="#fff" stroke="#555" />
                  <path d="M2 2H10L6 6.5Z" fill="#000" />
                  <path d="M0 8H12V18H0Z" fill="#000" />
                  <path d="M6 10V16M3 13H9" stroke="#fff" strokeWidth="1.5" />
                </svg>
              </button>
            </div>
            <div className="mr-5 h-px bg-[#a5a5a5]" />
            <div className="flex items-start pt-[7px] pl-[5px]">
              <div className="flex gap-0.5">
                {['앞면 재질', '뒷면 재질'].map((side) => (
                  <button key={side} type="button" aria-label={side} className="h-[60px] w-[35px] border border-[#a0a0a0] pb-3">
                    <MaterialPreview className="mt-3 h-[33px] w-full" />
                  </button>
                ))}
              </div>
              <div className="grid flex-1 grid-cols-[63px_1fr] items-center gap-x-1 gap-y-[3px] pr-1 text-[12px] text-black">
                <label htmlFor="layer" className="text-right whitespace-nowrap">
                  레이어(<u>L</u>):
                </label>
                <SelectBox id="layer" value="Layer0" className="h-6" />
                <label htmlFor="area" className="text-right">
                  영역:
                </label>
                <input
                  id="area"
                  readOnly
                  value="3114036 mm²"
                  className="h-6 w-full border-2 border-t-[#757575] border-r-white border-b-white border-l-[#757575] bg-[#f0f0f0] pl-0.5 outline-none"
                />
              </div>
            </div>
          </section>

          <SectionHeader title="재질" />

          <section className="flex h-[93px] shrink-0 border-b border-[#9a9a9a] pt-0.5 pl-0.5">
            <div className="h-[87px] w-[77px] shrink-0 border border-[#a0a0a0] pt-[5px]">
              <MaterialPreview className="h-[75px] w-full border-b border-[#999]" />
            </div>
            <input
              aria-label="재질 이름"
              readOnly
              value="기본값"
              className="ml-[3px] h-6 min-w-0 flex-1 border-2 border-t-[#757575] border-r-white border-b-white border-l-[#757575] bg-[#f0f0f0] pl-0.5 text-[12px] text-[#7c7c7c] outline-none"
            />
            <div className="mr-px ml-[3px] flex w-[29px] flex-col items-center gap-2.5 pt-[3px]">
              <button type="button" aria-label="보조 창">
                <svg viewBox="0 0 12 18" className="h-[18px] w-3" aria-hidden="true">
                  <path d="M.5.5H11.5V17.5H.5Z" fill="#fff" stroke="#555" />
                  <path d="M0 0H12V10H0Z" fill="#000" />
                  <path d="M3.5 4H8.5V7H3.5Z" fill="#fff" />
                  <path d="M2 16H10L6 11.5Z" fill="#000" />
                </svg>
              </button>
              <button type="button" aria-label="재질 만들기">
                <svg viewBox="0 0 22 22" className="size-[22px]" aria-hidden="true">
                  <path d="M4 5 13 1 20 4V15L12 19 4 16Z" fill="#1d1d18" stroke="#000" />
                  <path d="M6 5.5 13 2.5M10 7 17 4M13 10 19 7.5M13 14 19 11.5" stroke="#d8d4b0" strokeWidth="1.5" />
                  <circle cx="6.5" cy="15.5" r="5.5" fill="#fff" stroke="#111" strokeWidth="1.3" />
                  <path d="M6.5 12V19M3 15.5H10" stroke="#111" strokeWidth="1.5" />
                </svg>
              </button>
              <MaterialPreview className="size-[26px] shrink-0" />
            </div>
          </section>

          <div className="flex h-[31px] shrink-0 items-end pb-px text-[12px] text-black">
            <button type="button" className="h-[22px] w-[50px] border-t border-r-2 border-t-white border-r-[#777] pr-3">
              선택
            </button>
            <button type="button" className="h-5 w-[46px] border-t border-r-2 border-t-white border-r-[#777] pr-3">
              편집
            </button>
            <button type="button" aria-label="샘플 색칠" className="mr-1 mb-1 ml-auto">
              <svg viewBox="0 0 20 20" className="size-5" aria-hidden="true">
                <path d="M1 19 3 14 10 7 13 10 6 17Z" fill="#e2c060" stroke="#333" />
                <path d="M9 5 15 11M11 8 14 3Q17 0 19 2 20 5 17 7L13 10Z" fill="#444" stroke="#222" strokeWidth="1.8" />
              </svg>
            </button>
          </div>

          <NavRow id="collection" label="재질 모음" value="색상" />

          <div className="flex min-h-0 flex-1 overflow-hidden bg-white">
            <div className="grid flex-1 auto-rows-[62px] grid-cols-[repeat(3,62px)] gap-0.5 overflow-hidden pt-0.5 pl-[3px]">
              {COLORS.map((color) => (
                <button key={color} type="button" aria-label={color} className="border border-[#9a9a9a] p-px">
                  <span className="block size-full" style={{ backgroundColor: color }} />
                </button>
              ))}
            </div>
            <ScrollBar down />
          </div>

          <div className="mt-[3px] h-1.5 shrink-0 border-t-2 border-b border-t-[#777] border-b-[#9a9a9a]" />
          <div className="flex h-[22px] shrink-0 items-center border-b border-[#9a9a9a] bg-[#e4e4e4] pl-1 text-[12px] text-black">선택</div>
          <NavRow id="secondary" label="보조 재질 모음" value="재질" underline />

          <div className="flex h-[34px] shrink-0 overflow-hidden bg-white">
            <div className="grid flex-1 grid-cols-[repeat(3,62px)] gap-0.5 pt-0.5 pl-[3px]">
              {['폴더 1', '폴더 2', '폴더 3'].map((name) => (
                <button key={name} type="button" aria-label={name} className="flex h-[62px] justify-center border border-[#9a9a9a]">
                  <FolderIcon />
                </button>
              ))}
            </div>
            <ScrollBar />
          </div>
        </div>
        <ScrollBar down />
      </div>
    </aside>
  );
}

/* ---------- page ---------- */

const MENUS = ['파일(F)', '편집(E)', '보기(V)', '카메라(C)', '그리기(R)', '도구(T)', '창(W)', '도움말(H)'];

function StatusBar() {
  return (
    <footer className="flex h-[27px] shrink-0 border-t border-[#dcdcdc] bg-[#f0f0f0] pr-1.5 pl-[7px] text-black">
      <div className="flex min-w-0 flex-1 items-center pt-1">
        <svg viewBox="0 0 18 20" className="h-5 w-[18px] shrink-0" fill="none" aria-hidden="true">
          <ellipse cx="9" cy="10" rx="8" ry="9" stroke="#a5a5a5" strokeWidth="1.5" />
          <path d="M9 4Q13 4 12.5 8L9 17 5.5 8Q5 4 9 4Z" fill="#999" />
        </svg>
        <svg viewBox="0 0 18 20" className="ml-[17px] h-5 w-[18px] shrink-0" fill="none" aria-hidden="true">
          <ellipse cx="9" cy="10" rx="8" ry="9" stroke="#111" strokeWidth="1.7" />
          <circle cx="9" cy="5.5" r="1.7" fill="#000" />
          <path d="M6.5 8.5H11.5M9 8V16" stroke="#000" strokeWidth="2.3" />
        </svg>
        <svg viewBox="0 0 18 20" className="ml-[17px] h-5 w-[18px] shrink-0" fill="none" aria-hidden="true">
          <ellipse cx="9" cy="10" rx="8" ry="9" stroke="#a5a5a5" strokeWidth="1.5" />
          <circle cx="9" cy="7" r="3.5" fill="#8d8d8d" />
          <path d="M3 16Q4 11 9 11T15 16Q9 20 3 16Z" fill="#8d8d8d" />
        </svg>
        <div className="ml-3 h-4 w-px shrink-0 bg-[#8c8c8c]" />
        <p className="ml-[11px] flex-1 text-[17px] leading-6 whitespace-nowrap">끌어서 면을 밀거나 끌거나 값을 입력합니다. Ctrl = 새 시작 면 만들기 토글</p>
        <div className="h-4 w-px shrink-0 bg-[#8c8c8c]" />
        <label htmlFor="distance" className="ml-[11px] w-10 shrink-0 text-[17px] leading-6">
          거리
        </label>
      </div>
      <input
        id="distance"
        defaultValue="-568mm"
        className="mt-0.5 h-6 w-[250px] border border-b-0 border-[#a9bccd] bg-white px-[3px] pt-0.5 text-[16px] leading-5 outline-none"
      />
    </footer>
  );
}

export default function App() {
  return (
    <div className="flex h-screen flex-col bg-white pt-10 pb-11 font-[Noto_Sans,Noto_Sans_CJK_KR,sans-serif]">
      <nav className="flex h-6 shrink-0 items-center gap-3.5 pt-0.5 pl-[7px] text-[16px] text-black">
        {MENUS.map((menu) => (
          <a key={menu} href="#" className="leading-5 whitespace-nowrap">
            {menu}
          </a>
        ))}
      </nav>
      <TopToolbar />
      <div className="h-[3px] shrink-0 border-t border-b border-t-[#9fa19f] border-b-[#6e6e6e] bg-[#b9bab9]" />

      <main className="relative flex min-h-0 flex-1">
        <SideToolbar />
        <Viewport />
        <Tray />
        <p className="absolute bottom-0 left-0 flex h-[72px] w-[1310px] max-w-full items-center bg-black/43 pb-1 pl-[93px] font-[Noto_Sans_CJK_KR,sans-serif] text-[45px] leading-none text-[#f0f0f0]">
          밀기/끌기(Push/Pull) – P
        </p>
      </main>

      <StatusBar />
    </div>
  );
}
